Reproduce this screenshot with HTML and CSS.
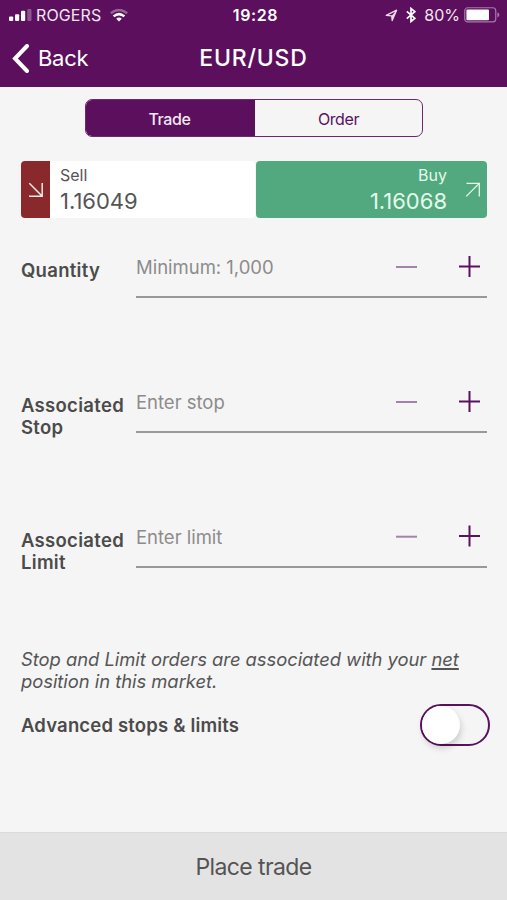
FILE: index.html
```html
<!DOCTYPE html>
<html lang="en">
<head>
<meta charset="utf-8">
<title>EUR/USD</title>
<link rel="stylesheet" href="styles.css">
</head>
<body>
<div class="screen">
  <header class="header">
    <div class="status">
      <div class="status-left">
        <svg class="signal" width="23" height="13" viewBox="0 0 23 13"><g fill="#fff"><rect x="0" y="7.4" width="4.2" height="4.6" rx="1"/><rect x="6" y="5.2" width="4.2" height="6.8" rx="1"/><rect x="12" y="1.8" width="4.2" height="10.2" rx="1"/><rect x="18.3" y="0" width="4.2" height="12" rx="1" opacity=".3"/></g></svg>
        <span class="carrier">ROGERS</span>
        <svg class="wifi" width="18" height="13" viewBox="0 0 18 13" fill="none" stroke="#fff" stroke-width="2.5"><path d="M.8 4.2Q9-2.2 17.2 4.2" opacity=".35"/><path d="M3.6 7.4Q9 2.8 14.4 7.4"/><path d="M6.2 9.7Q9 7.2 11.8 9.7L9 12.6Z" fill="#fff" stroke="none"/></svg>
      </div>
      <span class="clock">19:28</span>
      <div class="status-right">
        <svg class="location" width="13" height="13" viewBox="0 0 13 13"><path d="M1.2 6.3L11.6 1.2L7.2 11.6L6.7 6.8Z" fill="none" stroke="#e9dcea" stroke-width="1.3" stroke-linejoin="round"/><path d="M6.7 6.8L11.6 1.2L7.2 11.6Z" fill="#e9dcea"/></svg>
        <svg class="bluetooth" width="10" height="16" viewBox="0 0 10 16"><path d="M.8 4.4L8.8 11.3L5 14.5V1.5L8.8 4.7L.8 11.6" fill="none" stroke="#fff" stroke-width="1.7"/></svg>
        <span class="percent">80%</span>
        <svg class="battery" width="36" height="16" viewBox="0 0 36 16"><rect x=".75" y=".75" width="31" height="14.2" rx="3" fill="none" stroke="#a67ba7" stroke-width="1.2"/><rect x="2.4" y="2.4" width="22.6" height="10.9" rx="1" fill="#fff"/><path d="M33.4 5.2Q35.4 6 35.4 7.8Q35.4 9.6 33.4 10.4Z" fill="#a67ba7"/></svg>
      </div>
    </div>
    <nav class="nav">
      <a class="back"><svg width="17" height="29" viewBox="0 0 17 29"><path d="M15 2L3 14.5L15 27" fill="none" stroke="#fff" stroke-width="4" stroke-linecap="round"/></svg><span>Back</span></a>
      <h1 class="title">EUR/USD</h1>
    </nav>
  </header>
  <main class="content">
    <div class="segments"><button class="segment active">Trade</button><button class="segment">Order</button></div>
    <section class="prices">
      <div class="sell">
        <div class="sell-arrow"><svg width="16" height="16" viewBox="0 0 16 16"><path d="M1.3 1.3L14 14M1 14.2H14.2V1" fill="none" stroke="#fbe9e4" stroke-width="1.5"/></svg></div>
        <div class="quote"><span class="side">Sell</span><span class="price">1.16049</span></div>
      </div>
      <div class="buy">
        <div class="quote"><span class="side">Buy</span><span class="price">1.16068</span></div>
        <svg width="16" height="16" viewBox="0 0 16 16"><path d="M1.2 14.4L14 1.6M1.5 1.4H14.3V14.4" fill="none" stroke="#e3fbec" stroke-width="1.3"/></svg>
      </div>
    </section>
    <section class="fields">
      <div class="row">
        <label class="label">Quantity</label>
        <div class="field"><span class="hint">Minimum: 1,000</span><svg class="stepper" width="84" height="22" viewBox="0 0 84 22"><path d="M0 12H21" stroke="#a483aa" stroke-width="2"/><path d="M63 11.4H84M73.5 .9V21.9" stroke="#5b1060" stroke-width="2"/></svg></div>
      </div>
      <div class="row">
        <label class="label">Associated Stop</label>
        <div class="field"><span class="hint">Enter stop</span><svg class="stepper" width="84" height="22" viewBox="0 0 84 22"><path d="M0 12H21" stroke="#a483aa" stroke-width="2"/><path d="M63 11.4H84M73.5 .9V21.9" stroke="#5b1060" stroke-width="2"/></svg></div>
      </div>
      <div class="row">
        <label class="label">Associated Limit</label>
        <div class="field"><span class="hint">Enter limit</span><svg class="stepper" width="84" height="22" viewBox="0 0 84 22"><path d="M0 11.7H21" stroke="#a483aa" stroke-width="2"/><path d="M63 11H84M73.5 .5V21.5" stroke="#5b1060" stroke-width="2"/></svg></div>
      </div>
    </section>
    <p class="note">Stop and Limit orders are associated with your <u>net</u><br>position in this market.</p>
    <div class="advanced"><span class="advanced-label">Advanced stops &amp; limits</span><span class="switch"><span class="knob"></span></span></div>
  </main>
  <button class="place">Place trade</button>
</div>
</body>
</html>
```
FILE: styles.css
```css
* { box-sizing: border-box; }
body { margin: 0; font-family: Inter, "Liberation Sans", sans-serif; color: #4b4b4b; }
button { border: 0; margin: 0; padding: 0; font-family: inherit; background: none; }
svg { display: block; flex: none; }
.screen { height: 900px; background: #f5f5f5; display: flex; flex-direction: column; overflow: hidden; }
.header { height: 87px; flex: none; background: #5b0f5c; color: #fff; }
.status { height: 30px; display: grid; grid-template-columns: 1fr auto 1fr; align-items: center; padding: 0 8px 0 9px; }
.status-left, .status-right { display: flex; align-items: center; }
.status-right { justify-content: flex-end; }
.carrier { font-size: 16px; letter-spacing: .1px; margin-left: 4px; color: #f1e6f1; }
.wifi { margin-left: 9px; }
.clock { font-size: 16px; font-weight: 600; letter-spacing: .6px; margin-left: 3px; }
.bluetooth { margin-left: 8px; }
.percent { font-size: 16px; margin-left: 8px; color: #f1e6f1; }
.battery { margin-left: 4px; margin-right: -1px; }
.nav { height: 56px; display: grid; grid-template-columns: 1fr auto 1fr; align-items: center; padding: 0 12px; }
.back { display: flex; align-items: center; gap: 9px; font-size: 22px; letter-spacing: -.3px; }
.title { margin: 0; font-size: 23px; line-height: 28px; font-weight: 500; letter-spacing: .8px; }
.content { flex: 1; padding: 12px 20px 0 21px; }
.segments { display: flex; width: 338px; height: 38px; margin: 0 auto 0 64px; border: 1.5px solid #6b2a70; border-radius: 7px; overflow: hidden; }
.segment { flex: 1; padding-top: 1px; font-size: 16px; letter-spacing: -.4px; color: #5b1060; }
.segment.active { background: #5b0f5c; color: #f3e8f4; font-weight: 500; padding-right: 2px; }
.prices { display: flex; gap: 1px; height: 57px; margin-top: 24px; }
.sell { display: flex; width: 234px; background: #fff; border-radius: 4px; overflow: hidden; color: #555; }
.sell-arrow { width: 29px; background: #8a292b; display: flex; align-items: center; justify-content: center; }
.buy { flex: 1; display: flex; align-items: center; justify-content: flex-end; background: #53a97f; color: #e3fbec; border-radius: 4px; padding-right: 6px; gap: 18px; }
.quote { display: flex; flex-direction: column; padding: 4px 0 0 10px; height: 57px; }
.buy .quote { align-items: flex-end; }
.side { font-size: 16px; line-height: 21px; }
.price { font-size: 22px; line-height: 31px; }
.fields { padding-top: 24px; }
.row { display: flex; height: 135px; }
.label { width: 115px; padding-top: 17px; font-size: 18.5px; line-height: 22.4px; font-weight: 600; letter-spacing: .3px; }
.field { flex: 1; height: 56px; border-bottom: 2px solid #999; display: flex; align-items: center; justify-content: space-between; padding: 0 7px 7px 0; }
.hint { padding-top: 2px; font-size: 18.5px; letter-spacing: -.02px; color: #8c8c8c; }
.note { margin: 0; padding-top: 1px; font-size: 18.4px; line-height: 22px; font-style: italic; letter-spacing: -.03px; color: #555; }
.note u { text-underline-offset: 2px; text-decoration-thickness: 1.5px; }
.advanced { display: flex; align-items: center; justify-content: space-between; height: 42px; margin: 12px -3px 0 0; }
.advanced-label { font-size: 18.5px; font-weight: 600; letter-spacing: .17px; }
.switch { width: 70px; height: 42px; border: 2px solid #5b1060; border-radius: 21px; }
.knob { display: block; width: 38px; height: 38px; border-radius: 50%; background: #fff; box-shadow: 1px 4px 7px rgba(0,0,0,.18); }
.place { height: 68px; flex: none; background: #e3e3e4; border-top: 1px solid #dbdbdb; font-size: 23px; letter-spacing: -.6px; color: #545454; }
```
